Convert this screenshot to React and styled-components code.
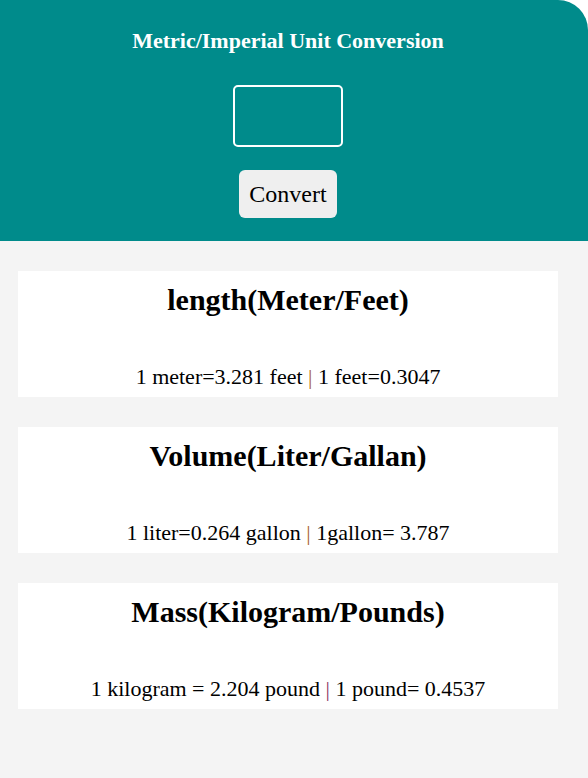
import styled, { createGlobalStyle } from "styled-components";

const GlobalStyle = createGlobalStyle`
  body {
    margin: 0;
    background: #ffffff;
    font-family: "Liberation Serif", "Times New Roman", serif;
  }
`;

const Page = styled.div`
  min-height: 100vh;
  display: flex;
  flex-direction: column;
`;

const Header = styled.header`
  background: #008b8b;
  border-top-right-radius: 30px;
  height: 241px;
  box-sizing: border-box;
  padding: 28px 12px 0 0;
  display: flex;
  flex-direction: column;
  align-items: center;

  h1 {
    margin: 0;
    color: #ffffff;
    font-size: 22px;
    line-height: 26px;
    font-weight: bold;
  }
`;

const Input = styled.input`
  margin-top: 31px;
  width: 110px;
  height: 62px;
  box-sizing: border-box;
  background: transparent;
  border: 2px solid #ffffff;
  border-radius: 5px;
  outline: none;
  color: #ffffff;
  font-size: 20px;
  text-align: center;
`;

const Button = styled.button`
  margin-top: 23px;
  width: 98px;
  height: 48px;
  background: #efefef;
  border: none;
  border-radius: 6px;
  font-family: "Liberation Serif", "Times New Roman", serif;
  font-size: 24px;
  color: #000000;
  cursor: pointer;
`;

const Results = styled.main`
  flex: 1;
  background: #f4f4f4;
  padding: 30px 30px 30px 18px;
  display: flex;
  flex-direction: column;
  gap: 30px;
`;

const Card = styled.section`
  background: #ffffff;
  height: 126px;
  box-sizing: border-box;
  padding: 12px 0 8px;
  display: flex;
  flex-direction: column;
  justify-content: space-between;
  align-items: center;

  h2 {
    margin: 0;
    font-size: 30px;
    line-height: 34px;
    font-weight: bold;
  }

  p {
    margin: 0;
    font-size: 22px;
    line-height: 25px;
  }
`;

const Pipe = styled.span`
  color: ${(p) => p.$tint};
`;

const cards = [
  { title: "length(Meter/Feet)", left: "1 meter=3.281 feet", right: "1 feet=0.3047", tint: "#a8652c" },
  { title: "Volume(Liter/Gallan)", left: "1 liter=0.264 gallon", right: "1gallon= 3.787", tint: "#a8652c" },
  { title: "Mass(Kilogram/Pounds)", left: "1 kilogram = 2.204 pound", right: "1 pound= 0.4537", tint: "#8e3a66" },
];

export default function App() {
  return (
    <>
      <GlobalStyle />
      <Page>
        <Header>
          <h1>Metric/Imperial Unit Conversion</h1>
          <Input type="number" />
          <Button>Convert</Button>
        </Header>
        <Results>
          {cards.map((c) => (
            <Card key={c.title}>
              <h2>{c.title}</h2>
              <p>
                {c.left} <Pipe $tint={c.tint}>|</Pipe> {c.right}
              </p>
            </Card>
          ))}
        </Results>
      </Page>
    </>
  );
}
